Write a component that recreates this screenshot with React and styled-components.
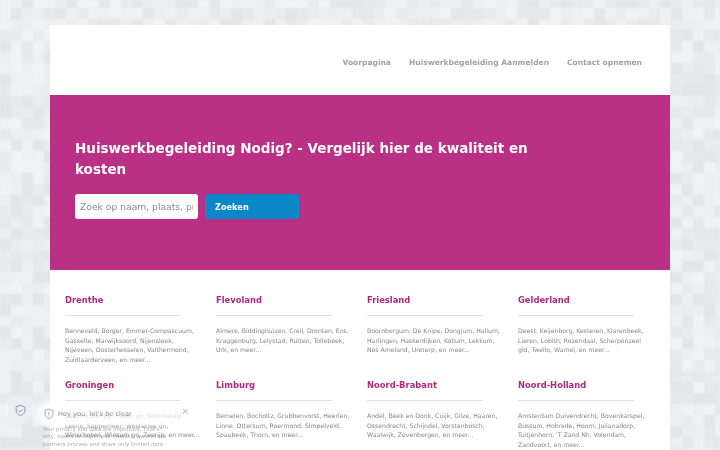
import React from 'react';
import styled, { createGlobalStyle } from 'styled-components';

const Global = createGlobalStyle`
  html, body { margin: 0; padding: 0; height: 450px; overflow: hidden; background: #eceef0; }
  * { box-sizing: border-box; }
  body { font-family: "DejaVu Sans", sans-serif; }
`;
const Backdrop = styled.svg`position: fixed; inset: 0; z-index: 0; filter: blur(.8px);`;
const Page = styled.div`position: relative; z-index: 1; padding-top: 25px;`;
const Shell = styled.main`width: 620px; margin: 0 auto; background: #fff; border-radius: 2px 2px 0 0; overflow: hidden;`;
const Header = styled.header`height: 70px; display: flex; align-items: center; justify-content: flex-end; gap: 18px; padding: 4px 28px 0 0;`;
const NavLink = styled.a`font-size: 7.55px; font-weight: 700; color: #9fa1ab;`;
const Hero = styled.section`height: 175px; background: #b93085; padding: 43px 25px 0;`;
const Title = styled.h1`margin: 0 0 14px; width: 470px; font-size: 13.5px; line-height: 21px; font-weight: 700; color: #fff;`;
const SearchRow = styled.form`display: flex; gap: 7.5px;`;
const SearchInput = styled.input`width: 122.5px; height: 25px; border: 0; border-radius: 3px; background: #fff; padding: 0 5px; font: 9.2px "DejaVu Sans", sans-serif; color: #555;
  &::placeholder { color: #8b8b8b; opacity: 1; }`;
const SearchButton = styled.button`width: 94px; height: 25px; border: 0; border-radius: 3px; background: #0b87c9; color: #fff; font: 700 8.2px "DejaVu Sans", sans-serif; text-align: left; padding: 0 10px;`;
const Regions = styled.section`display: grid; grid-template-columns: repeat(4, 135px); column-gap: 16px; grid-auto-rows: 85px; padding: 24px 15px 0;`;
const Region = styled.article`display: flex; flex-direction: column;`;
const RegionName = styled.h2`margin: 0; font-size: 8.4px; line-height: 12px; font-weight: 700; color: #ab2a7e;`;
const Rule = styled.hr`width: 116px; height: 1px; margin: 9px 0 10px; border: 0; background: #dfe1e5;`;
const Places = styled.p`margin: 0; font-size: 6.15px; line-height: 9.7px; color: #85858a;`;
const ShieldButton = styled.div`position: fixed; left: 8px; top: 398px; width: 24px; height: 24px; z-index: 3; border-radius: 7px; background: rgba(235,238,245,.9); box-shadow: 0 0 5px rgba(255,255,255,.8); display: flex; align-items: center; justify-content: center;`;
const Pill = styled.div`position: fixed; left: 38px; top: 403px; width: 160px; height: 22px; z-index: 3; border-radius: 11px; background: rgba(255,255,255,.7); box-shadow: 0 0 5px rgba(255,255,255,.7); display: flex; align-items: center; padding: 0 5px; gap: 3px; font-size: 6.6px; color: #8f8f92;`;
const Close = styled.span`position: absolute; right: 9px; top: 3px; font-size: 9px; color: #b5b5b8;`;
const Notice = styled.p`position: fixed; left: 43px; top: 426px; width: 128px; margin: 0; z-index: 3; font-size: 5.35px; line-height: 7.4px; color: rgba(120,120,125,.6);`;

const regions = [
  ['Drenthe', 'Benneveld, Borger, Emmer-Compascuum, Gasselte, Marwijksoord, Nijensleek, Nijeveen, Oosterhesselen, Valthermond, Zuidlaarderveen, en meer...'],
  ['Flevoland', 'Almere, Biddinghuizen, Creil, Dronten, Ens, Kraggenburg, Lelystad, Rutten, Tollebeek, Urk, en meer...'],
  ['Friesland', 'Boornbergum, De Knipe, Dongjum, Hallum, Harlingen, Haskerdijken, Kollum, Lekkum, Nes Ameland, Ureterp, en meer...'],
  ['Gelderland', 'Deest, Keijenborg, Kesteren, Klarenbeek, Lieren, Lobith, Rozendaal, Scherpenzeel gld, Twello, Wamel, en meer...'],
  ['Groningen', 'Bedum, Delfzijl, Haren gn, Kommerzijl, Leens, Sappemeer, Westerlee gn, Winschoten, Winsum gn, Zeerijp, en meer...'],
  ['Limburg', 'Bemelen, Bocholtz, Grubbenvorst, Heerlen, Linne, Ottersum, Roermond, Simpelveld, Spaubeek, Thorn, en meer...'],
  ['Noord-Brabant', 'Andel, Beek en Donk, Cuijk, Gilze, Haaren, Ossendrecht, Schijndel, Vorstenbosch, Waalwijk, Zevenbergen, en meer...'],
  ['Noord-Holland', "Amsterdam Duivendrecht, Bovenkarspel, Bussum, Hobrede, Hoorn, Julianadorp, Tuitjenhorn, 'T Zand Nh, Volendam, Zandvoort, en meer..."],
];
const shades = ['#e6e8eb', '#e9ebee', '#eceef0', '#eef0f2', '#f0f2f4', '#e3e5e8'];
const tiles = [];
let seed = 37;
for (let y = -3; y < 450; y += 11) for (let x = 0; x < 720; x += 11) {
  seed = (seed * 9301 + 49297) % 233280;
  tiles.push({ x, y, fill: shades[Math.floor(seed / 233280 * shades.length)] });
}
const ShieldIcon = ({ size, color, check }) => (
  <svg width={size} height={size} viewBox="0 0 24 24" fill="none" stroke={color} strokeWidth="1.8" strokeLinejoin="round" strokeLinecap="round">
    <path d="M12 2.5 20 5.5v6c0 5-3.4 8.4-8 10-4.6-1.6-8-5-8-10v-6z" />
    {check ? <path d="m8.5 12 2.5 2.5 4.5-4.5" /> : <path d="M12 7.5v5.5M12 16.2v.1" />}
  </svg>
);
export default function App() {
  return (
    <>
      <Global />
      <Backdrop width="720" height="450" aria-hidden="true">
        {tiles.map((t, i) => <rect key={i} x={t.x} y={t.y} width="11.5" height="11.5" fill={t.fill} />)}
      </Backdrop>
      <Page>
        <Shell>
          <Header>
            <NavLink>Voorpagina</NavLink>
            <NavLink>Huiswerkbegeleiding Aanmelden</NavLink>
            <NavLink>Contact opnemen</NavLink>
          </Header>
          <Hero>
            <Title>Huiswerkbegeleiding Nodig? - Vergelijk hier de kwaliteit en kosten</Title>
            <SearchRow>
              <SearchInput placeholder="Zoek op naam, plaats, provincie" />
              <SearchButton type="button">Zoeken</SearchButton>
            </SearchRow>
          </Hero>
          <Regions>
            {regions.map(([name, places]) => (
              <Region key={name}>
                <RegionName>{name}</RegionName>
                <Rule />
                <Places>{places}</Places>
              </Region>
            ))}
          </Regions>
        </Shell>
      </Page>
      <ShieldButton><ShieldIcon size={13} color="#8d95a8" check /></ShieldButton>
      <Pill>
        <ShieldIcon size={12} color="#a5a5a8" />
        <span>Hey you, let's be clear</span>
        <Close>×</Close>
      </Pill>
      <Notice>Your privacy and data are important. That's why, based on legitimate interest, we and our partners process and share only limited data</Notice>
    </>
  );
}
